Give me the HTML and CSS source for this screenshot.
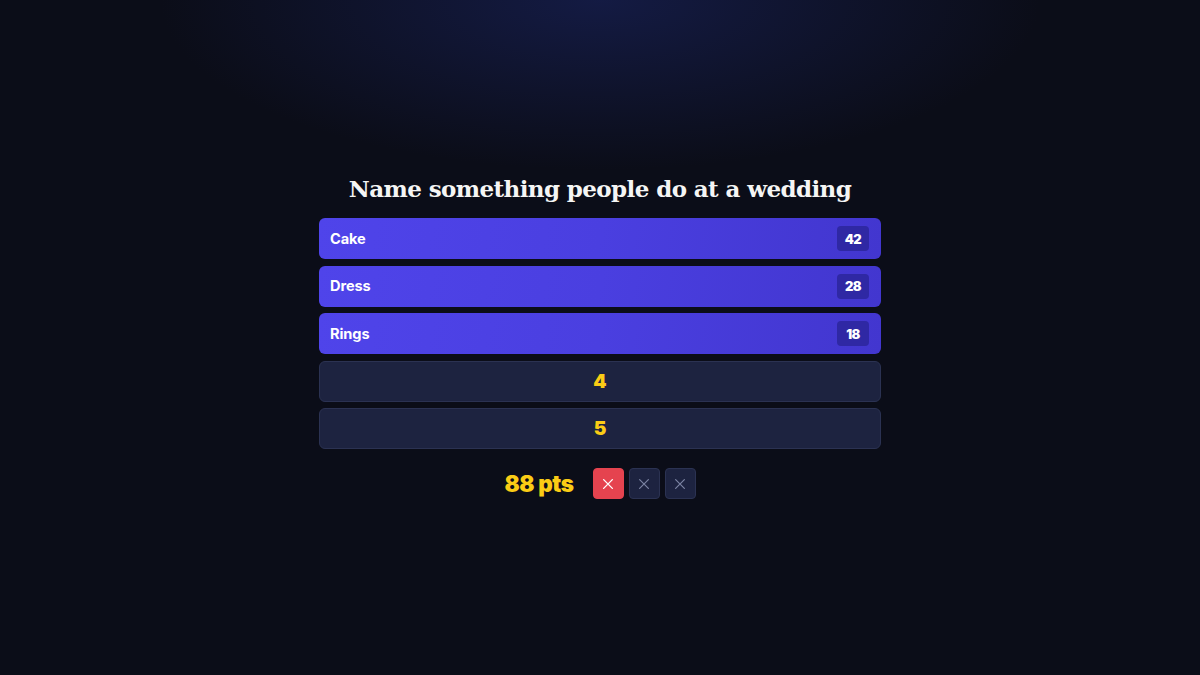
FILE: index.html
```html
<!DOCTYPE html>
<html lang="en">
<head>
<meta charset="utf-8">
<title>Survey Board</title>
<link rel="stylesheet" href="styles.css">
</head>
<body>
<main class="stage">
  <h1 class="question">Name something people do at a wedding</h1>
  <section class="board">
    <div class="row revealed"><span class="answer">Cake</span><span class="count">42</span></div>
    <div class="row revealed"><span class="answer">Dress</span><span class="count">28</span></div>
    <div class="row revealed"><span class="answer">Rings</span><span class="count">18</span></div>
    <div class="row hidden"><span class="slot">4</span></div>
    <div class="row hidden"><span class="slot">5</span></div>
  </section>
  <footer class="status">
    <span class="score">88 pts</span>
    <div class="strikes">
      <span class="strike on"><svg viewBox="0 0 16 16" width="14" height="14"><path d="M3 3L13 13M13 3L3 13" stroke="currentColor" stroke-width="1.6" stroke-linecap="round" fill="none"/></svg></span>
      <span class="strike"><svg viewBox="0 0 16 16" width="14" height="14"><path d="M3 3L13 13M13 3L3 13" stroke="currentColor" stroke-width="1.4" stroke-linecap="round" fill="none"/></svg></span>
      <span class="strike"><svg viewBox="0 0 16 16" width="14" height="14"><path d="M3 3L13 13M13 3L3 13" stroke="currentColor" stroke-width="1.4" stroke-linecap="round" fill="none"/></svg></span>
    </div>
  </footer>
</main>
</body>
</html>
```

FILE: styles.css
```css
* { box-sizing: border-box; }
html, body { margin: 0; height: 100%; }
body {
  background-color: #0b0d18;
  background-image: radial-gradient(ellipse 440px 170px at 50% 0%, rgba(22, 30, 78, 0.8), rgba(11, 13, 24, 0) 100%);
  background-repeat: no-repeat;
  font-family: "Inter", "Lato", sans-serif;
  color: #fff;
}
.stage {
  width: 562px;
  margin: 0 auto;
  padding-top: 172px;
  display: flex;
  flex-direction: column;
  align-items: stretch;
}
.question {
  margin: 0 0 12px;
  text-align: center;
  font-family: "DejaVu Serif", serif;
  font-weight: bold;
  font-size: 23px;
  line-height: 34px;
  letter-spacing: -0.6px;
  color: #f5f5f4;
}
.board {
  display: flex;
  flex-direction: column;
  gap: 6.6px;
}
.row {
  height: 41px;
  border-radius: 6px;
  display: flex;
  align-items: center;
}
.row.revealed {
  background: linear-gradient(100deg, #4f44ea 0%, #4a3fe0 50%, #4236cf 100%);
  justify-content: space-between;
  padding: 0 12px 0 11px;
}
.row.hidden {
  background: #1d2340;
  border: 1px solid #2b3252;
  justify-content: center;
}
.answer {
  font-weight: 700;
  font-size: 14.6px;
  color: #fff;
  letter-spacing: -0.1px;
}
.count {
  min-width: 32px;
  height: 25px;
  padding: 0 6px;
  border-radius: 4px;
  background: #2f28a4;
  display: flex;
  align-items: center;
  justify-content: center;
  font-weight: 900;
  font-size: 13px;
  letter-spacing: -0.5px;
  color: #fff;
}
.slot {
  font-weight: 900;
  font-size: 19px;
  color: #facc15;
}
.status {
  margin-top: 19px;
  display: flex;
  justify-content: center;
  align-items: center;
  gap: 19px;
}
.score {
  font-weight: 900;
  font-size: 22.5px;
  color: #facc15;
  letter-spacing: -0.4px;
}
.strikes {
  display: flex;
  gap: 5px;
}
.strike {
  width: 31px;
  height: 31px;
  border-radius: 4px;
  background: #1d2340;
  border: 1px solid #2b3252;
  color: #7c84a3;
  display: flex;
  align-items: center;
  justify-content: center;
}
.strike.on {
  background: #e5434f;
  border-color: #e5434f;
  color: #fff;
}
```
